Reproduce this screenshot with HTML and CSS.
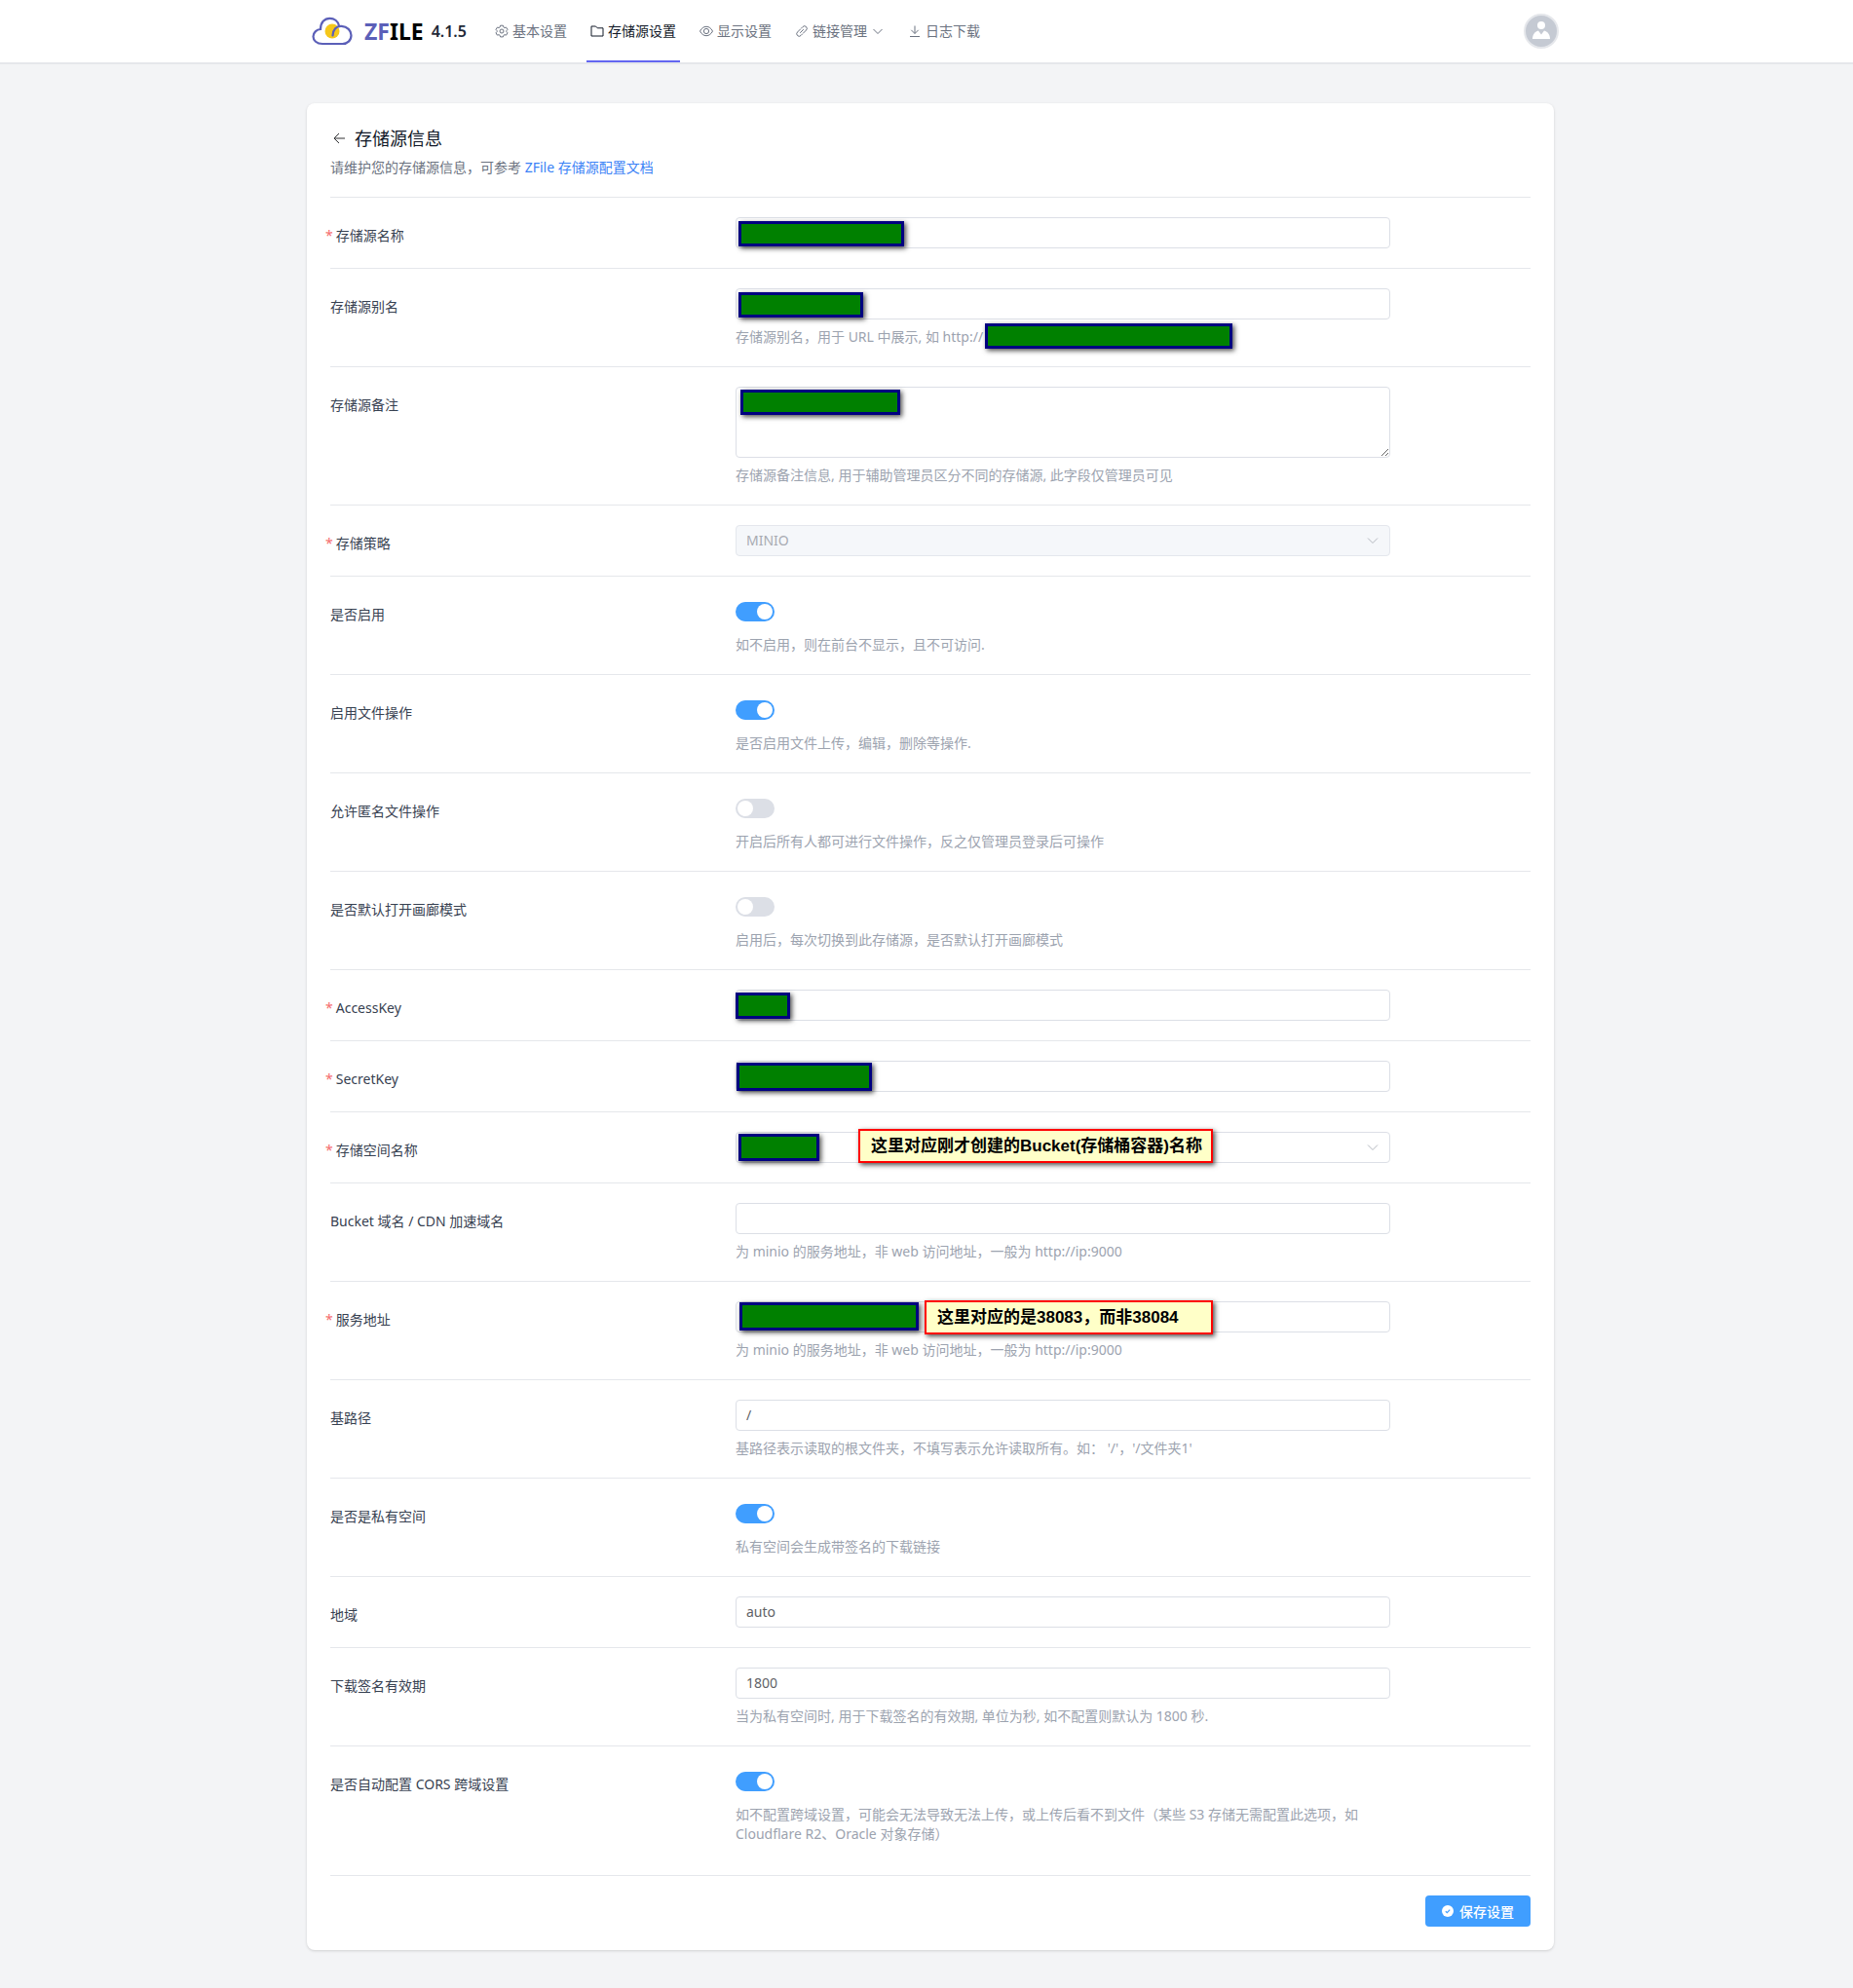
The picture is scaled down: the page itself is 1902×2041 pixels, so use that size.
FILE: index.html
```html
<!doctype html>
<html lang="zh-CN">
  <head>
    <meta charset="utf-8" />
    <meta name="viewport" content="width=device-width, initial-scale=1">
    <title>ZFILE - 存储源设置</title>
    <link rel="stylesheet" href="styles.css">
  </head>

  <body>
    <header class="header">
      <div class="header-inner">
        <a class="logo" href="#">
          <svg class="logo-cloud" viewBox="0 0 42 30" fill="none">
            <circle cx="21" cy="15" r="7.500" fill="#f5c71a"/>
            <path d="M21.500 19.500C22 13 25.500 9.500 30.500 9.800C36.500 10.200 40.500 14.500 40.500 19.200C40.500 24.500 36.500 28 31.500 28H11C5 28 1.500 24.500 1.500 20.500C1.500 16.500 5 13.300 9 13C9 6 13 1.800 18.500 1.800C23 1.800 27 4.500 28 9.500" stroke="#5b5fb8" stroke-width="2.200" stroke-linecap="round"/>
          </svg>
          <span class="logo-text"><span class="logo-accent">ZF</span>ILE</span>
          <span class="version">4.1.5</span>
        </a>
        <nav class="nav">
          <a class="nav-item" href="#">
            <svg class="icon" viewBox="0 0 14 14"><path d="M5.600 1.200h2.800l.5 1.700 1 .6 1.700-.4 1.400 2.400-1.200 1.200v.8l1.200 1.300-1.400 2.300-1.700-.4-1 .6-.5 1.600H5.600l-.5-1.600-1-.6-1.700.4L1 8.800l1.200-1.300v-.8L1 5.500l1.400-2.400 1.700.4 1-.6z"/><circle cx="7" cy="7" r="2"/></svg>
            基本设置
          </a>
          <a class="nav-item active" href="#">
            <svg class="icon" viewBox="0 0 14 14"><path d="M1 2h4.500l1.700 1.800H13V12H1z"/></svg>
            存储源设置
          </a>
          <a class="nav-item" href="#">
            <svg class="icon" viewBox="0 0 14 14"><path d="M.5 7C2 4 4.300 2.300 7 2.300S12 4 13.500 7C12 10 9.700 11.700 7 11.700S2 10 .5 7z"/><circle cx="7" cy="7" r="2.600"/></svg>
            显示设置
          </a>
          <a class="nav-item" href="#">
            <svg class="icon" viewBox="0 0 14 14"><path d="M6 4.500l2-2a2.400 2.400 0 0 1 3.500 3.500L8.500 9M8 9.500l-2 2A2.400 2.400 0 0 1 2.500 8l3-3M5.200 8.800l3.600-3.600"/></svg>
            链接管理
            <svg class="icon" viewBox="0 0 14 14"><path d="M2.500 5L7 9.500 11.500 5"/></svg>
          </a>
          <a class="nav-item" href="#">
            <svg class="icon" viewBox="0 0 14 14"><path d="M7 1.500v7.800M3.300 5.800L7 9.500l3.700-3.700M2 12.500h10"/></svg>
            日志下载
          </a>
        </nav>
        <button class="avatar" type="button" aria-label="用户">
          <svg viewBox="0 0 36 36"><circle cx="18" cy="12" r="4" fill="#fff"/><path d="M9 26c0-4 2-7.500 6-8.500l3 4 3-4c4 1 6 4.500 6 8.500z" fill="#fff"/></svg>
        </button>
      </div>
    </header>

    <main class="container">
      <form class="card">
        <div class="card-head">
          <h1 class="title">
            <svg class="back" viewBox="0 0 16 16"><path d="M14 8H3M8 3L3 8l5 5"/></svg>
            存储源信息
          </h1>
          <p class="subtitle">请维护您的存储源信息，可参考 <a href="#">ZFile 存储源配置文档</a></p>
        </div>

        <div class="row">
          <label class="label required" for="name">存储源名称</label>
          <div class="field">
            <input class="input" type="text" id="name">
            <span class="mask mask-name"></span>
          </div>
        </div>

        <div class="row">
          <label class="label" for="alias">存储源别名</label>
          <div class="field">
            <input class="input" type="text" id="alias">
            <p class="hint">存储源别名，用于 URL 中展示, 如 http://</p>
            <span class="mask mask-alias"></span>
            <span class="mask mask-url"></span>
          </div>
        </div>

        <div class="row">
          <label class="label" for="remark">存储源备注</label>
          <div class="field">
            <textarea class="input textarea" id="remark"></textarea>
            <p class="hint">存储源备注信息, 用于辅助管理员区分不同的存储源, 此字段仅管理员可见</p>
            <span class="mask mask-remark"></span>
          </div>
        </div>

        <div class="row">
          <label class="label required" for="type">存储策略</label>
          <div class="field">
            <select class="input" id="type" disabled><option>MINIO</option></select>
            <svg class="arrow" viewBox="0 0 14 14"><path d="M2 4.500l5 5 5-5"/></svg>
          </div>
        </div>

        <div class="row">
          <label class="label" for="enable">是否启用</label>
          <div class="field">
            <input class="switch" type="checkbox" id="enable" checked>
            <p class="hint">如不启用，则在前台不显示，且不可访问.</p>
          </div>
        </div>

        <div class="row">
          <label class="label" for="operator">启用文件操作</label>
          <div class="field">
            <input class="switch" type="checkbox" id="operator" checked>
            <p class="hint">是否启用文件上传，编辑，删除等操作.</p>
          </div>
        </div>

        <div class="row">
          <label class="label" for="anonymous">允许匿名文件操作</label>
          <div class="field">
            <input class="switch" type="checkbox" id="anonymous">
            <p class="hint">开启后所有人都可进行文件操作，反之仅管理员登录后可操作</p>
          </div>
        </div>

        <div class="row">
          <label class="label" for="gallery">是否默认打开画廊模式</label>
          <div class="field">
            <input class="switch" type="checkbox" id="gallery">
            <p class="hint">启用后，每次切换到此存储源，是否默认打开画廊模式</p>
          </div>
        </div>

        <div class="row">
          <label class="label required" for="access_key">AccessKey</label>
          <div class="field">
            <input class="input" type="text" id="access_key">
            <span class="mask mask-access"></span>
          </div>
        </div>

        <div class="row">
          <label class="label required" for="secret_key">SecretKey</label>
          <div class="field">
            <input class="input" type="text" id="secret_key">
            <span class="mask mask-secret"></span>
          </div>
        </div>

        <div class="row">
          <label class="label required" for="bucket">存储空间名称</label>
          <div class="field">
            <select class="input" id="bucket"><option></option></select>
            <svg class="arrow" viewBox="0 0 14 14"><path d="M2 4.500l5 5 5-5"/></svg>
            <span class="mask mask-bucket"></span>
            <span class="note note-bucket">这里对应刚才创建的Bucket(存储桶容器)名称</span>
          </div>
        </div>

        <div class="row">
          <label class="label" for="domain">Bucket 域名 / CDN 加速域名</label>
          <div class="field">
            <input class="input" type="text" id="domain">
            <p class="hint">为 minio 的服务地址，非 web 访问地址，一般为 http://ip:9000</p>
          </div>
        </div>

        <div class="row">
          <label class="label required" for="endpoint">服务地址</label>
          <div class="field">
            <input class="input" type="text" id="endpoint">
            <p class="hint">为 minio 的服务地址，非 web 访问地址，一般为 http://ip:9000</p>
            <span class="mask mask-endpoint"></span>
            <span class="note note-endpoint">这里对应的是38083，而非38084</span>
          </div>
        </div>

        <div class="row">
          <label class="label" for="base_path">基路径</label>
          <div class="field">
            <input class="input" type="text" id="base_path" value="/">
            <p class="hint">基路径表示读取的根文件夹，不填写表示允许读取所有。如： '/'，'/文件夹1'</p>
          </div>
        </div>

        <div class="row">
          <label class="label" for="private">是否是私有空间</label>
          <div class="field">
            <input class="switch" type="checkbox" id="private" checked>
            <p class="hint">私有空间会生成带签名的下载链接</p>
          </div>
        </div>

        <div class="row">
          <label class="label" for="region">地域</label>
          <div class="field">
            <input class="input" type="text" id="region" value="auto">
          </div>
        </div>

        <div class="row">
          <label class="label" for="expire">下载签名有效期</label>
          <div class="field">
            <input class="input" type="text" id="expire" value="1800">
            <p class="hint">当为私有空间时, 用于下载签名的有效期, 单位为秒, 如不配置则默认为 1800 秒.</p>
          </div>
        </div>

        <div class="row row-last">
          <label class="label" for="cors">是否自动配置 CORS 跨域设置</label>
          <div class="field">
            <input class="switch" type="checkbox" id="cors" checked>
            <p class="hint">如不配置跨域设置，可能会无法导致无法上传，或上传后看不到文件（某些 S3 存储无需配置此选项，如 Cloudflare R2、Oracle 对象存储）</p>
          </div>
        </div>

        <div class="actions">
          <button class="save" type="button">
            <svg viewBox="0 0 12 12"><circle cx="6" cy="6" r="6" fill="#fff"/><path d="M3.800 6.200l1.600 1.500 2.800-3" fill="none" stroke="#409eff" stroke-width="1.200"/></svg>
            保存设置
          </button>
        </div>
      </form>
    </main>
  </body>
</html>
```
FILE: styles.css
```css
*{
  box-sizing: border-box;
}
body{
  margin: 0;
  background-color: #f3f4f6;
  font-family: "Noto Sans", "Noto Sans CJK SC", sans-serif;
  font-size: 14px;
  line-height: 20px;
  color: #374151;
}
h1, p{
  margin: 0;
}
a{
  text-decoration: none;
}

/* Top bar */
.header{
  background-color: #fff;
  border-bottom: 2px solid #e5e7eb;
  padding-left: 8px;
}
.header-inner{
  display: flex;
  align-items: center;
  max-width: 1280px;
  height: 64px;
  margin: 0 auto;
  padding-left: 5px;
}
.logo{
  display: flex;
  align-items: center;
  color: #000;
}
.logo-cloud{
  width: 42px;
  height: 30px;
  margin-right: 12px;
}
.logo-text{
  font-size: 23px;
  font-weight: 700;
}
.logo-accent{
  color: #5b5fb8;
}
.version{
  margin-left: 8px;
  font-size: 16px;
  font-weight: 600;
  color: #1f2937;
}
.nav{
  display: flex;
  align-self: stretch;
  gap: 16px;
  margin-left: 25px;
}
.nav-item{
  display: flex;
  align-items: center;
  gap: 4px;
  padding: 2px 4px 0;
  border-bottom: 2px solid transparent;
  color: #6b7280;
}
.nav-item.active{
  border-color: #6366f1;
  color: #111827;
}
.icon, .back, .arrow{
  width: 14px;
  height: 14px;
  fill: none;
  stroke: currentColor;
}
.avatar{
  width: 36px;
  height: 36px;
  margin-left: auto;
  margin-right: -5px;
  padding: 0;
  border: 2px solid #e5e7eb;
  border-radius: 50%;
  background-color: #c5cad3;
}
.avatar svg{
  display: block;
  margin: -2px;
}

/* Settings card */
.container{
  padding: 40px 0 39px 8px;
}
.card{
  max-width: 1280px;
  margin: 0 auto;
  padding: 24px;
  border-radius: 8px;
  background-color: #fff;
  box-shadow: 0 1px 3px rgba(0, 0, 0, 0.15);
}
.card-head{
  padding-bottom: 20px;
}
.title{
  display: flex;
  align-items: center;
  gap: 8px;
  margin-bottom: 8px;
  font-size: 18px;
  font-weight: 400;
  line-height: 24px;
  color: #111827;
}
.back{
  width: 16px;
  height: 16px;
  margin-left: 1px;
  stroke: #303133;
}
.subtitle{
  color: #6b7280;
}
.subtitle a{
  color: #3b82f6;
}
.row{
  display: grid;
  grid-template-columns: repeat(3, 1fr);
  gap: 16px;
  padding: 20px 0;
  border-top: 1px solid #e5e7eb;
}
.row-last{
  padding-bottom: 32px;
}
.label{
  justify-self: start;
  align-self: start;
  margin-top: 9px;
}
.required{
  margin-left: -5px;
}
.required::before{
  content: "*";
  margin-right: 3px;
  color: #f56c6c;
}
.field{
  position: relative;
  grid-column: span 2;
  max-width: 672px;
}
.input{
  display: block;
  width: 100%;
  height: 32px;
  padding: 0 10px 2px;
  border: 1px solid #dcdfe6;
  border-radius: 4px;
  background-color: #fff;
  font-family: inherit;
  font-size: 14px;
  color: #606266;
  appearance: none;
}
.input:disabled{
  border-color: #e4e7ed;
  background-color: #f5f7fa;
  color: #a8abb2;
  opacity: 1;
}
.textarea{
  height: 73px;
  resize: vertical;
}
.arrow{
  position: absolute;
  top: 9px;
  right: 11px;
  color: #b4b8bf;
}
.hint{
  margin-top: 8px;
  color: #9ca3af;
}
.switch{
  display: block;
  width: 40px;
  height: 20px;
  margin: 6px 0 14px;
  padding: 2px;
  border-radius: 10px;
  background-color: #dcdfe6;
  appearance: none;
}
.switch::before{
  content: "";
  display: block;
  width: 16px;
  height: 16px;
  border-radius: 50%;
  background-color: #fff;
}
.switch:checked{
  background-color: #409eff;
}
.switch:checked::before{
  margin-left: auto;
}
.switch + .hint{
  margin-top: 0;
}

/* Green boxes over private values */
.mask{
  position: absolute;
  top: 4px;
  left: 3px;
  height: 26px;
  border: 3px solid #000080;
  background-color: #008000;
  box-shadow: 2px 2px 5px rgba(0, 0, 0, 0.7);
}
.mask-name{
  width: 170px;
}
.mask-alias{
  width: 128px;
}
.mask-url{
  top: 36px;
  left: 256px;
  width: 254px;
}
.mask-remark{
  top: 3px;
  left: 5px;
  width: 164px;
}
.mask-access{
  top: 3px;
  left: 0;
  width: 56px;
  height: 27px;
}
.mask-secret{
  top: 2px;
  left: 1px;
  width: 139px;
  height: 29px;
}
.mask-bucket{
  top: 2px;
  width: 83px;
  height: 28px;
}
.mask-endpoint{
  top: 1px;
  left: 4px;
  width: 184px;
  height: 29px;
}

/* Yellow notes */
.note{
  position: absolute;
  height: 35px;
  padding-left: 11px;
  border: 2px solid #f00;
  background-color: #ffffc8;
  box-shadow: 2px 2px 5px rgba(0, 0, 0, 0.7);
  font-family: "Liberation Sans", "Noto Sans CJK SC", sans-serif;
  font-size: 17px;
  font-weight: 700;
  line-height: 31px;
  white-space: nowrap;
  color: #000;
}
.note-bucket{
  top: -3px;
  left: 126px;
  width: 364px;
}
.note-endpoint{
  top: -1px;
  left: 194px;
  width: 296px;
}

.actions{
  display: flex;
  justify-content: flex-end;
  padding-top: 20px;
  border-top: 1px solid #e5e7eb;
}
.save{
  display: flex;
  align-items: center;
  gap: 6px;
  height: 32px;
  padding: 0 17px;
  border: 0;
  border-radius: 4px;
  background-color: #409eff;
  font-family: inherit;
  font-size: 14px;
  font-weight: 500;
  color: #fff;
}
.save svg{
  width: 12px;
  height: 12px;
}
```
